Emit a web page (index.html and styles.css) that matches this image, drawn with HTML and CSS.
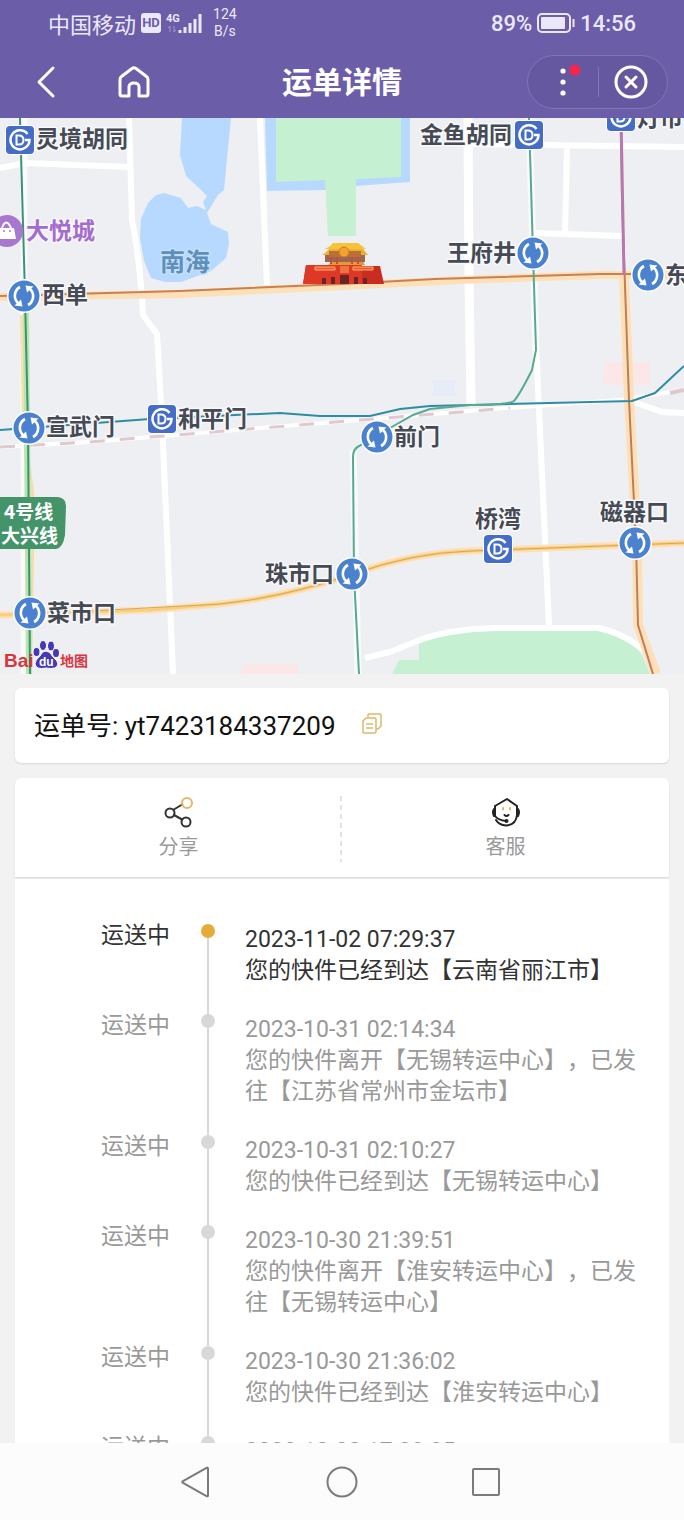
FILE: index.html
```html
<!DOCTYPE html>
<html lang="zh-CN">
<head>
  <meta charset="UTF-8">
  <meta name="viewport" content="width=device-width, initial-scale=1.0">
  <title>运单详情</title>
  <link rel="stylesheet" href="styles.css">
</head>
<body>

  <!-- Status bar -->
  <div class="status-bar">
    <div class="status-left">
      <span class="carrier">中国移动</span>
      <span class="hd">HD</span>
      <svg class="signal" width="36" height="26" viewBox="0 0 36 26">
        <text x="0" y="12" class="signal-text">4G</text>
        <path d="M4 22v-6l-2 2M8 16v6l2-2" class="signal-data"/>
        <path d="M14 20v3M19 17v6M24 13v10M29 9v14M34 4v19" class="signal-bars"/>
      </svg>
      <span class="speed">124<br>B/s</span>
    </div>
    <div class="status-right">
      <span>89%</span>
      <svg width="40" height="22" viewBox="0 0 40 22">
        <rect x="2" y="2" width="32" height="18" rx="4" fill="none" stroke="#ece8fb" stroke-width="2"/>
        <rect x="5" y="5" width="24" height="12" rx="1" fill="#ece8fb"/>
        <path d="M37.500 7v8" stroke="#ece8fb" stroke-width="2"/>
      </svg>
      <span>14:56</span>
    </div>
  </div>

  <!-- Header -->
  <header class="header">
    <div class="header-left">
      <button class="icon-btn" aria-label="返回">
        <svg width="34" height="34" viewBox="0 0 34 34"><path d="M23 3L9 17L23 31" class="line-white"/></svg>
      </button>
      <button class="icon-btn" aria-label="首页">
        <svg width="34" height="34" viewBox="0 0 34 34"><path d="M3 14.500Q3 12.500 4.500 11.500L15 3.500Q17 2.200 19 3.500L29.500 11.500Q31 12.500 31 14.500V29Q31 31 29 31H22V21.500Q21.500 18 17 18Q12.500 18 12 21.500V31H5Q3 31 3 29Z" class="line-white"/></svg>
      </button>
    </div>
    <h1>运单详情</h1>
    <div class="capsule">
      <button class="capsule-btn" aria-label="更多">
        <svg width="36" height="40" viewBox="0 0 36 40">
          <circle cx="18" cy="9" r="2.600" fill="#fff"/>
          <circle cx="18" cy="20" r="2.600" fill="#fff"/>
          <circle cx="18" cy="31" r="2.600" fill="#fff"/>
          <circle cx="30" cy="8" r="5.500" fill="#f5254f"/>
        </svg>
      </button>
      <button class="capsule-btn" aria-label="关闭">
        <svg width="36" height="36" viewBox="0 0 36 36">
          <circle cx="17" cy="18" r="15" class="line-white"/>
          <path d="M12 13l10 10M22 13l-10 10" class="line-white"/>
        </svg>
      </button>
    </div>
  </header>

  <main class="content">

    <!-- Map -->
    <svg class="map" viewBox="0 118 684 556" role="img" aria-label="地图">
      <defs>
        <g id="metro">
          <rect x="-15" y="-15" width="30" height="30" rx="5" fill="#fff"/>
          <rect x="-14" y="-14" width="28" height="28" rx="4" fill="#456dc8"/>
          <path d="M7.500 -6A9.500 9.500 0 1 0 9.500 0H5" fill="none" stroke="#fff" stroke-width="2.500"/>
          <path d="M-3.500 -4.500H-1Q3.500 -4.500 3.500 0Q3.500 4.500 -1 4.500H-3.500Z" fill="none" stroke="#fff" stroke-width="2"/>
        </g>
        <g id="transfer">
          <circle r="17" fill="#fff"/>
          <circle r="15.500" fill="#4a82d0"/>
          <path d="M-4 -9A10 10 0 0 0 -6 7" fill="none" stroke="#fff" stroke-width="2.600"/>
          <path d="M-9.500 9.500L-1.500 10.500L-3 3.500Z" fill="#fff"/>
          <path d="M4 9A10 10 0 0 0 6 -7" fill="none" stroke="#fff" stroke-width="2.600"/>
          <path d="M9.500 -9.500L1.500 -10.500L3 -3.500Z" fill="#fff"/>
        </g>
      </defs>

      <rect y="118" width="684" height="556" fill="#eeeff3"/>

      <!-- Water and parks -->
      <path d="M182 118H231L224 190L218 195L207 213L203 202L207 196L199 188L186 176L180 155Z" fill="#b8d9ff"/>
      <path d="M156 195L164 193L181 198L188 208L197 206L206 210L211 224L228 232L229 244L226 258L211 271L181 282H165L151 278L144 261L140 238L141 219L148 203Z" fill="#b8d9ff"/>
      <path d="M265 118H410V182L356 186V190H325L267 191Z" fill="#b8d9ff"/>
      <path d="M276 118H401V177L356 179V236H328L325 180L276 182Z" fill="#c5f0d2"/>
      <path d="M392 674L399 660H419V643Q450 631 490 631H598Q630 638 642 655L650 674Z" fill="#c5f0d2"/>
      <path d="M605 362H650V385H602Z" fill="#fbe6e8"/>
      <path d="M433 380H455V396H433Z" fill="#e6edf9"/>
      <path d="M245 664H298V674H240Z" fill="#fbe6e8"/>

      <!-- White roads -->
      <g fill="none" stroke="#fff" stroke-width="6">
        <path d="M129 118L132 220Q140 260 143 315L157 334L162 420L173 674"/>
        <path d="M0 168L25 163L129 167"/>
        <path d="M260 118L267 285"/>
        <path d="M468 118L469 280L471 404" stroke-width="9"/>
        <path d="M468 144L684 147M567 147L565 234M535 233L622 236"/>
        <path d="M536 345L549 625"/>
        <path d="M365 658L390 652L420 640Q450 629 495 628H598Q625 633 650 655"/>
        <path d="M634 402L662 412L684 413"/>
        <path d="M24 118V674M529 118L536 350M353 450L358 674" stroke-width="7" opacity="0.700"/>
      </g>

      <!-- Railway -->
      <path d="M0 447L90 442L200 433L360 420L480 410L620 400L684 390" fill="none" stroke="#fff" stroke-width="4"/>
      <path d="M0 447L90 442L200 433L360 420L510 408" fill="none" stroke="#dfc9ce" stroke-width="3" stroke-dasharray="15 15"/>
      <path d="M670 393L684 390" stroke="#dfc9ce" stroke-width="4"/>

      <!-- Main roads -->
      <g fill="none" stroke="#fde0b8">
        <path d="M0 297L180 294L342 286L460 280L600 275H684" stroke-width="8"/>
        <path d="M624 276L629 400L637 540L638 625L656 674" stroke-width="10"/>
        <path d="M0 615L150 610L220 604Q280 598 351 575Q410 553 470 551L684 543" stroke-width="7"/>
      </g>
      <g fill="none" stroke="#f8cf7c">
        <path d="M0 615L150 610L220 604Q280 598 351 575Q410 553 470 551L684 543" stroke-width="3"/>
        <path d="M22 315L24 430L33 500L30 674" stroke-width="4" opacity="0.600"/>
      </g>

      <!-- Subway lines -->
      <g fill="none" stroke-width="2">
        <path d="M26 312L29 674" stroke="#b9e5ac" stroke-width="6"/>
        <path d="M20 118L25 295L28 428L30 674" stroke="#389477"/>
        <path d="M0 296L180 291L342 284L435 279L600 274H640" stroke="#ca8050"/>
        <path d="M621 118L622 200L629 400L636 543L638 625L653 674" stroke="#c27c58"/>
        <path d="M621 118L624 275" stroke="#b878ac" stroke-width="3"/>
        <path d="M0 430L28 428L150 419L280 413L320 416H370L400 409L430 406L632 401L655 393L684 366" stroke="#2e8ca5"/>
        <path d="M529 118L533 253L536 350L532 370Q520 394 514 401Q508 405 470 405L430 409L413 415L390 428L359 446Q353 449 353 457L354 575L359 674" stroke="#56aa90"/>
        <path d="M90 611L220 604Q280 598 351 575Q410 553 470 551L684 543" stroke="#d6a75b" stroke-width="1"/>
      </g>

      <!-- Tiananmen -->
      <g>
        <path d="M306 265L309 266H380L384 284H303Z" fill="#c92c20"/>
        <path d="M306 265H362V284H303Z" fill="#de3927"/>
        <path d="M315 267H335V270H315ZM353 267H373V270H353Z" fill="#f1593a" stroke="#f8b266" stroke-width="1"/>
        <path d="M322 284V278H326V284M331 284V277H335V284M340 284V275H349V284M354 284V277H358V284M363 284V278H367V284" fill="#6c2422"/>
        <path d="M331 262L328 265H365L360 255H327Z" fill="#e39b30"/>
        <path d="M325 255H365V262H325Z" fill="#9c6654"/>
        <path d="M333 243H358L368 255H322Q329 251 333 243Z" fill="#e9b331"/>
        <path d="M329 251H361V257H329Z" fill="#b96f35"/>
        <path d="M333 243H358L366 249H324Q330 247 333 243Z" fill="#f7c33b"/>
        <path d="M331 257V264M337 257V264M352 257V264M358 257V264" stroke="#c64e32" stroke-width="2"/>
        <circle cx="344" cy="252" r="5" fill="#f0a32d" stroke="#d5782a"/>
        <path d="M340 266H349V273H340Z" fill="#ed7441"/>
      </g>

      <!-- Stations -->
      <use href="#metro" x="20" y="140"/>
      <use href="#metro" x="529" y="135"/>
      <use href="#metro" x="621" y="117"/>
      <use href="#metro" x="162" y="419"/>
      <use href="#metro" x="498" y="549"/>
      <use href="#transfer" x="24" y="296"/>
      <use href="#transfer" x="533" y="253"/>
      <use href="#transfer" x="648" y="275"/>
      <use href="#transfer" x="29" y="428"/>
      <use href="#transfer" x="377" y="437"/>
      <use href="#transfer" x="352" y="574"/>
      <use href="#transfer" x="635" y="543"/>
      <use href="#transfer" x="30" y="613"/>

      <g class="map-label">
        <text x="36" y="147">灵境胡同</text>
        <text x="420" y="143">金鱼胡同</text>
        <text x="637" y="126">灯市口</text>
        <text x="447" y="261">王府井</text>
        <text x="665" y="283">东单</text>
        <text x="42" y="303">西单</text>
        <text x="46" y="435">宣武门</text>
        <text x="178" y="427">和平门</text>
        <text x="394" y="445">前门</text>
        <text x="475" y="527">桥湾</text>
        <text x="600" y="520">磁器口</text>
        <text x="265" y="582">珠市口</text>
        <text x="47" y="621">菜市口</text>
        <text x="26" y="239" class="mall">大悦城</text>
        <text x="160" y="271" class="lake">南海</text>
      </g>

      <!-- Mall pin -->
      <circle cx="7" cy="231" r="16" fill="#a877cf"/>
      <path d="M-2 228H14L16 239H-4Z" fill="#fff"/>
      <path d="M2 228Q6 217 11 228" fill="none" stroke="#fff" stroke-width="2"/>
      <circle cx="4" cy="231" r="1" fill="#a877cf"/>
      <circle cx="10" cy="231" r="1" fill="#a877cf"/>

      <!-- Line badge -->
      <path d="M-4 497H58Q66 498 66 506L65 535Q63 548 56 549H-4Z" fill="#44946a"/>
      <g class="badge-text">
        <text x="4" y="519">4号线</text>
        <text x="1" y="543">大兴线</text>
      </g>

      <!-- Baidu logo -->
      <g class="baidu">
        <text x="4" y="667" class="baidu-latin">Bai</text>
        <text x="60" y="666" class="baidu-cn">地图</text>
        <g fill="#4438b4" stroke="#fff" stroke-width="1">
          <path d="M46 651Q50 651 53 657Q58 661 58 664Q57 670 46 668Q36 670 35 664Q35 660 40 656Q42 651 46 651Z"/>
          <ellipse cx="36.500" cy="652" rx="3.500" ry="4.500"/>
          <ellipse cx="43" cy="645.500" rx="3.500" ry="5"/>
          <ellipse cx="51" cy="646" rx="3.500" ry="5"/>
          <ellipse cx="56" cy="653" rx="3.500" ry="4.500"/>
        </g>
        <text x="39" y="666" class="baidu-du">du</text>
      </g>
    </svg>

    <!-- Waybill number -->
    <section class="card waybill">
      <span>运单号: yt7423184337209</span>
      <button class="icon-btn" aria-label="复制">
        <svg width="20" height="22" viewBox="0 0 20 22" fill="none" stroke="#dcb968" stroke-width="1.500" stroke-linejoin="round">
          <path d="M6 5V3Q6 2 7 2H18Q19 2 19 3V14L16 17H14"/>
          <path d="M4 6H13Q14 6 14 7V20Q14 21 13 21H2Q1 21 1 20V9Z"/>
          <path d="M4 12H11M4 16H11"/>
        </svg>
      </button>
    </section>

    <!-- Actions -->
    <section class="card actions">
      <button class="action">
        <svg width="32" height="32" viewBox="0 0 32 32" fill="none" stroke="#333" stroke-width="2">
          <path d="M10 14L20 8M10 18.500L20 24"/>
          <circle cx="7" cy="17" r="4.500"/>
          <circle cx="23" cy="26" r="4.500"/>
          <circle cx="24" cy="7" r="5" stroke="#e0b968"/>
        </svg>
        <span>分享</span>
      </button>
      <button class="action">
        <svg width="32" height="32" viewBox="0 0 32 32" fill="none" stroke="#222" stroke-width="2" stroke-linejoin="round" stroke-linecap="round">
          <path d="M5 13V10L17 3L27 10V13V19Q26 29 16 29.500Q9 29 6 24"/>
          <path d="M5 20Q8 24 16 25"/>
          <path d="M4 13Q2 16 4 20H5V13ZM27 13V20H28Q30 16 28 13Z" fill="#222"/>
          <circle cx="16.500" cy="25" r="1" fill="#222"/>
          <path d="M14.500 19Q16.500 21 18.500 19"/>
          <path d="M13 12V13.500M20 12V13.500" stroke="#ddb966"/>
        </svg>
        <span>客服</span>
      </button>
    </section>

    <!-- Tracking timeline -->
    <ol class="timeline">
      <li class="step current">
        <span class="state">运送中</span>
        <span class="node"></span>
        <div class="detail">
          <time>2023-11-02 07:29:37</time>
          <p>您的快件已经到达【云南省丽江市】</p>
        </div>
      </li>
      <li class="step">
        <span class="state">运送中</span>
        <span class="node"></span>
        <div class="detail">
          <time>2023-10-31 02:14:34</time>
          <p>您的快件离开【无锡转运中心】，已发往【江苏省常州市金坛市】</p>
        </div>
      </li>
      <li class="step">
        <span class="state">运送中</span>
        <span class="node"></span>
        <div class="detail">
          <time>2023-10-31 02:10:27</time>
          <p>您的快件已经到达【无锡转运中心】</p>
        </div>
      </li>
      <li class="step">
        <span class="state">运送中</span>
        <span class="node"></span>
        <div class="detail">
          <time>2023-10-30 21:39:51</time>
          <p>您的快件离开【淮安转运中心】，已发往【无锡转运中心】</p>
        </div>
      </li>
      <li class="step">
        <span class="state">运送中</span>
        <span class="node"></span>
        <div class="detail">
          <time>2023-10-30 21:36:02</time>
          <p>您的快件已经到达【淮安转运中心】</p>
        </div>
      </li>
      <li class="step">
        <span class="state">运送中</span>
        <span class="node"></span>
        <div class="detail">
          <time>2023-10-30 17:29:35</time>
        </div>
      </li>
    </ol>
  </main>

  <!-- System navigation -->
  <nav class="system-nav">
    <button class="icon-btn" aria-label="后退">
      <svg width="34" height="34" viewBox="0 0 34 34"><path d="M28 3.500V30.500Q28 32 26.500 31L3 18Q1.500 17 3 16L26.500 3Q28 2 28 3.500Z" class="line-gray"/></svg>
    </button>
    <button class="icon-btn" aria-label="主屏幕">
      <svg width="34" height="34" viewBox="0 0 34 34"><circle cx="17" cy="17" r="14.500" class="line-gray"/></svg>
    </button>
    <button class="icon-btn" aria-label="最近任务">
      <svg width="34" height="34" viewBox="0 0 34 34"><rect x="3" y="4" width="26" height="26" rx="1" class="line-gray"/></svg>
    </button>
  </nav>

</body>
</html>
```

FILE: styles.css
```css
* {
  margin: 0;
  padding: 0;
  box-sizing: border-box;
}

body {
  font-family: Roboto, "Noto Sans CJK SC", sans-serif;
  background: #f2f2f2;
  color: #222;
  display: flex;
  flex-direction: column;
  height: 100vh;
}

button {
  background: none;
  border: none;
  font: inherit;
  color: inherit;
  cursor: pointer;
}

svg {
  display: block;
}

.icon-btn {
  display: flex;
}

.line-white {
  fill: none;
  stroke: #fff;
  stroke-width: 3;
  stroke-linecap: round;
  stroke-linejoin: round;
}

.line-gray {
  fill: none;
  stroke: #7b7b7b;
  stroke-width: 2;
}

/* Status bar */
.status-bar {
  background: #6b5da8;
  color: #ece8fb;
  display: flex;
  justify-content: space-between;
  align-items: center;
  height: 46px;
  padding: 0 48px;
}

.status-left, .status-right {
  display: flex;
  align-items: center;
  gap: 4px;
}

.status-left {
  gap: 5px;
}

.carrier {
  font-size: 22px;
}

.hd {
  background: #ece8fb;
  color: #6b5da8;
  border-radius: 3px;
  font-size: 13px;
  font-weight: 700;
  line-height: 20px;
  width: 20px;
  text-align: center;
}

.signal-text {
  font-size: 11px;
  font-weight: 700;
  fill: #ece8fb;
}

.signal-data {
  fill: none;
  stroke: #a195d2;
  stroke-width: 1;
}

.signal-bars {
  stroke: #ece8fb;
  stroke-width: 3;
}

.speed {
  font-size: 14px;
  line-height: 17px;
  margin-left: 6px;
  text-align: center;
}

.status-right {
  font-size: 22px;
  font-weight: 500;
}

/* Header */
.header {
  background: #6b5da8;
  color: #fff;
  display: grid;
  grid-template-columns: 1fr auto 1fr;
  align-items: center;
  height: 72px;
  padding: 0 16px 0 30px;
}

.header-left {
  display: flex;
  gap: 53px;
}

.header h1 {
  font-size: 30px;
  line-height: 40px;
  font-weight: 700;
  margin-right: 14px;
  padding-top: 2px;
}

.capsule {
  justify-self: end;
  display: flex;
  width: 141px;
  height: 54px;
  background: #6658a0;
  border: 1px solid #8075b8;
  border-radius: 27px;
}

.capsule-btn {
  flex: 1;
  display: flex;
  justify-content: center;
  align-items: center;
}

.capsule-btn + .capsule-btn {
  background: linear-gradient(#8075b8, #8075b8) left center / 1px 30px no-repeat;
}

/* Page content */
.content {
  flex: 1;
  min-height: 0;
  overflow-y: auto;
  scrollbar-width: none;
}

.map {
  width: 100%;
  height: auto;
}

.map text {
  font-family: "Noto Sans CJK SC", sans-serif;
  font-weight: 700;
}

.map-label {
  font-size: 23px;
  fill: #464a55;
  stroke: #f8f9fb;
  stroke-width: 3;
  stroke-linejoin: round;
  paint-order: stroke;
}

.map-label .mall {
  fill: #a56bcf;
}

.map-label .lake {
  fill: #5f8fbb;
  font-size: 25px;
  stroke: #c5e0fd;
}

.badge-text {
  fill: #fff;
  font-size: 19px;
}

.baidu {
  fill: #d9363e;
}

.map .baidu-latin {
  font-family: "Liberation Sans", sans-serif;
  font-size: 19px;
}

.baidu-cn {
  font-size: 14px;
}

.map .baidu-du {
  font-family: "Liberation Sans", sans-serif;
  font-size: 12px;
  fill: #fff;
}

/* Cards */
.card {
  background: #fff;
  border-radius: 6px;
  margin: 14px 15px 0;
  box-shadow: 0 1px 2px rgba(0, 0, 0, 0.12);
}

.waybill {
  display: flex;
  align-items: center;
  gap: 26px;
  height: 75px;
  padding: 0 19px 5px;
  font-size: 26px;
  color: #111;
}

.actions {
  display: grid;
  grid-template-columns: 1fr 1fr;
  margin-top: 15px;
  padding: 18px 0 15px;
  border-radius: 6px 6px 0 0;
}

.action {
  display: flex;
  flex-direction: column;
  align-items: center;
  gap: 5px;
  font-size: 20px;
  line-height: 29px;
  color: #999;
}

.action:first-child {
  background: repeating-linear-gradient(#e2e2e2 0 5px, transparent 5px 9px) right / 2px 100% no-repeat;
}

/* Timeline */
.timeline {
  list-style: none;
  background: #fff;
  margin: 2px 15px 0;
  padding: 39px 25px 20px 0;
  font-size: 23px;
  line-height: 31px;
  text-spacing-trim: space-all;
}

.step {
  display: grid;
  grid-template-columns: 155px 75px 1fr;
  color: #999;
}

.state {
  padding-top: 2px;
  text-align: right;
}

.node {
  background: linear-gradient(#d8d8d8, #d8d8d8) center / 2px 100% no-repeat;
}

.node::before {
  content: "";
  display: block;
  width: 14px;
  height: 14px;
  margin: 6px auto 0;
  border-radius: 50%;
  background: #d8d8d8;
}

.detail {
  padding: 6px 0 22px;
}

.detail time {
  display: block;
}

.current {
  color: #333;
}

.current .node {
  background-position: center 14px;
}

.current .node::before {
  background: #e5ac3b;
}

/* System navigation */
.system-nav {
  background: #fcfcfc;
  display: flex;
  justify-content: center;
  align-items: center;
  gap: 111px;
  height: 77px;
}
```
